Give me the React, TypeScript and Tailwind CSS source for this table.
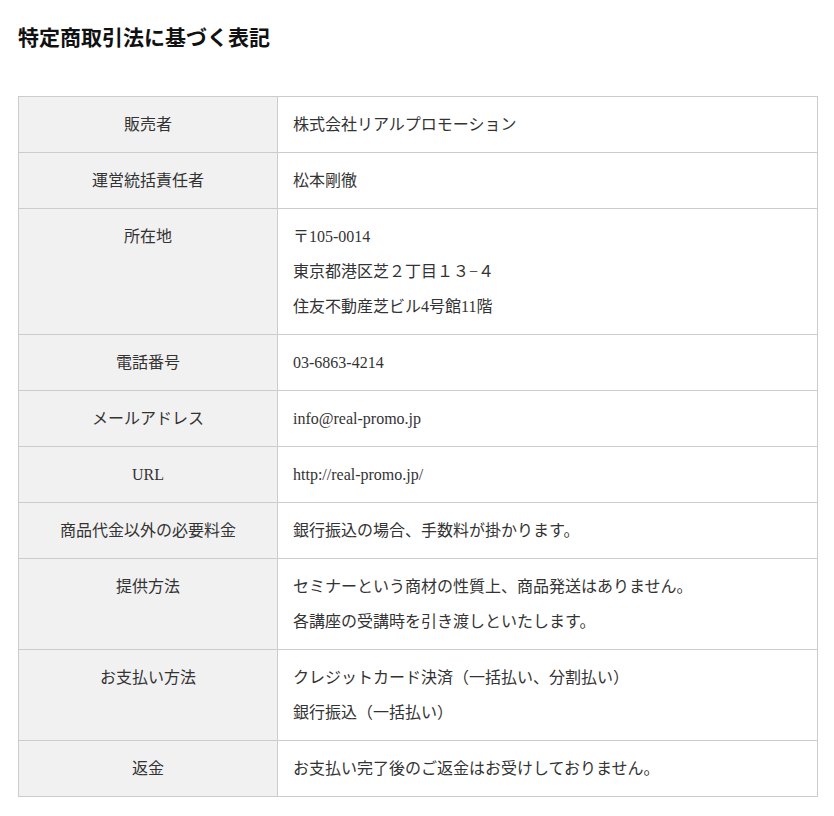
const rows: { label: string; lines: string[] }[] = [
  { label: "販売者", lines: ["株式会社リアルプロモーション"] },
  { label: "運営統括責任者", lines: ["松本剛徹"] },
  { label: "所在地", lines: ["〒105-0014", "東京都港区芝２丁目１３−４", "住友不動産芝ビル4号館11階"] },
  { label: "電話番号", lines: ["03-6863-4214"] },
  { label: "メールアドレス", lines: ["info@real-promo.jp"] },
  { label: "URL", lines: ["http://real-promo.jp/"] },
  { label: "商品代金以外の必要料金", lines: ["銀行振込の場合、手数料が掛かります。"] },
  {
    label: "提供方法",
    lines: ["セミナーという商材の性質上、商品発送はありません。", "各講座の受講時を引き渡しといたします。"],
  },
  { label: "お支払い方法", lines: ["クレジットカード決済（一括払い、分割払い）", "銀行振込（一括払い）"] },
  { label: "返金", lines: ["お支払い完了後のご返金はお受けしておりません。"] },
];

export default function App() {
  return (
    <div className="min-h-[816px] bg-white px-[18px] pt-[24px] font-['Liberation_Serif','Noto_Sans_CJK_JP',serif] text-[#333]">
      <h2 className="text-[21px] font-bold leading-[28px] text-[#111]">特定商取引法に基づく表記</h2>
      <table className="mt-[44px] w-[800px] border-collapse border border-[#ccc] text-[16px] leading-[35px]">
        <tbody>
          {rows.map((row) => (
            <tr key={row.label}>
              <th className="w-[259px] border border-[#ccc] bg-[#f1f1f1] px-[15px] py-[10px] align-top font-normal">
                {row.label}
              </th>
              <td className="border border-[#ccc] px-[15px] py-[10px] align-top">
                {row.lines.map((line) => (
                  <p key={line}>{line}</p>
                ))}
              </td>
            </tr>
          ))}
        </tbody>
      </table>
    </div>
  );
}
